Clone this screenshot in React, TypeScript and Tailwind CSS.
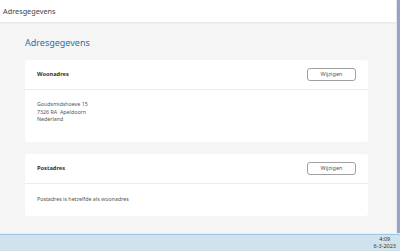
export default function App() {
  const font = { fontFamily: '"Noto Sans", "Open Sans", sans-serif' }

  return (
    <div className="w-[400px] h-[251px] flex flex-col overflow-hidden bg-[#f5f5f5]" style={font}>
      <div className="flex flex-1 min-h-0">
        <div className="flex-1 flex flex-col min-w-0">
          <div className="h-[22px] bg-white flex items-center px-[3px] shadow-[0_1px_2px_rgba(0,0,0,0.08)] z-10">
            <span className="text-[7.3px] text-[#444]">Adresgegevens</span>
          </div>
          <div className="flex-1 pl-[25px] pr-[28px] pt-[15px]">
            <h1 className="text-[9px] leading-[12px] text-[#2f6fa8]">Adresgegevens</h1>

            <div className="mt-[11px] bg-white rounded-[3px]">
              <div className="h-[30px] flex items-center justify-between px-[12px] border-b border-[#ececec]">
                <span className="text-[5.7px] font-bold text-[#333]">Woonadres</span>
                <button className="w-[49px] h-[13px] rounded-[3px] border border-[#a0a0a0] text-[5.5px] text-[#555] flex items-center justify-center">
                  Wijzigen
                </button>
              </div>
              <div className="px-[12px] pt-[11px] h-[52px] text-[5.3px] leading-[7.5px] text-[#555]">
                <div>Goudsmidshoeve 15</div>
                <div>7326 RA&nbsp; Apeldoorn</div>
                <div>Nederland</div>
              </div>
            </div>

            <div className="mt-[12px] bg-white rounded-[3px]">
              <div className="h-[30px] flex items-center justify-between px-[12px] border-b border-[#ececec]">
                <span className="text-[5.7px] font-bold text-[#333]">Postadres</span>
                <button className="w-[49px] h-[13px] rounded-[3px] border border-[#a0a0a0] text-[5.5px] text-[#555] flex items-center justify-center">
                  Wijzigen
                </button>
              </div>
              <div className="px-[12px] h-[32px] flex items-center text-[5.3px] text-[#555]">
                Postadres is hetzelfde als woonadres
              </div>
            </div>
          </div>
        </div>
        <div className="w-[1px] bg-[#e8e8ee]" />
        <div className="w-[3px] bg-[#9aa3c6]" />
      </div>

      <div className="h-[18px] flex flex-col">
        <div className="h-[1px] bg-[#e6eef4]" />
        <div className="h-[1px] bg-[#9cc8e4]" />
        <div className="flex-1 bg-[#d0e2ee] flex justify-end items-center pr-[4px]">
          <div className="flex flex-col items-center text-[5.5px] leading-[7px] text-[#333]">
            <span>4:09</span>
            <span>6-3-2023</span>
          </div>
        </div>
      </div>
    </div>
  )
}
